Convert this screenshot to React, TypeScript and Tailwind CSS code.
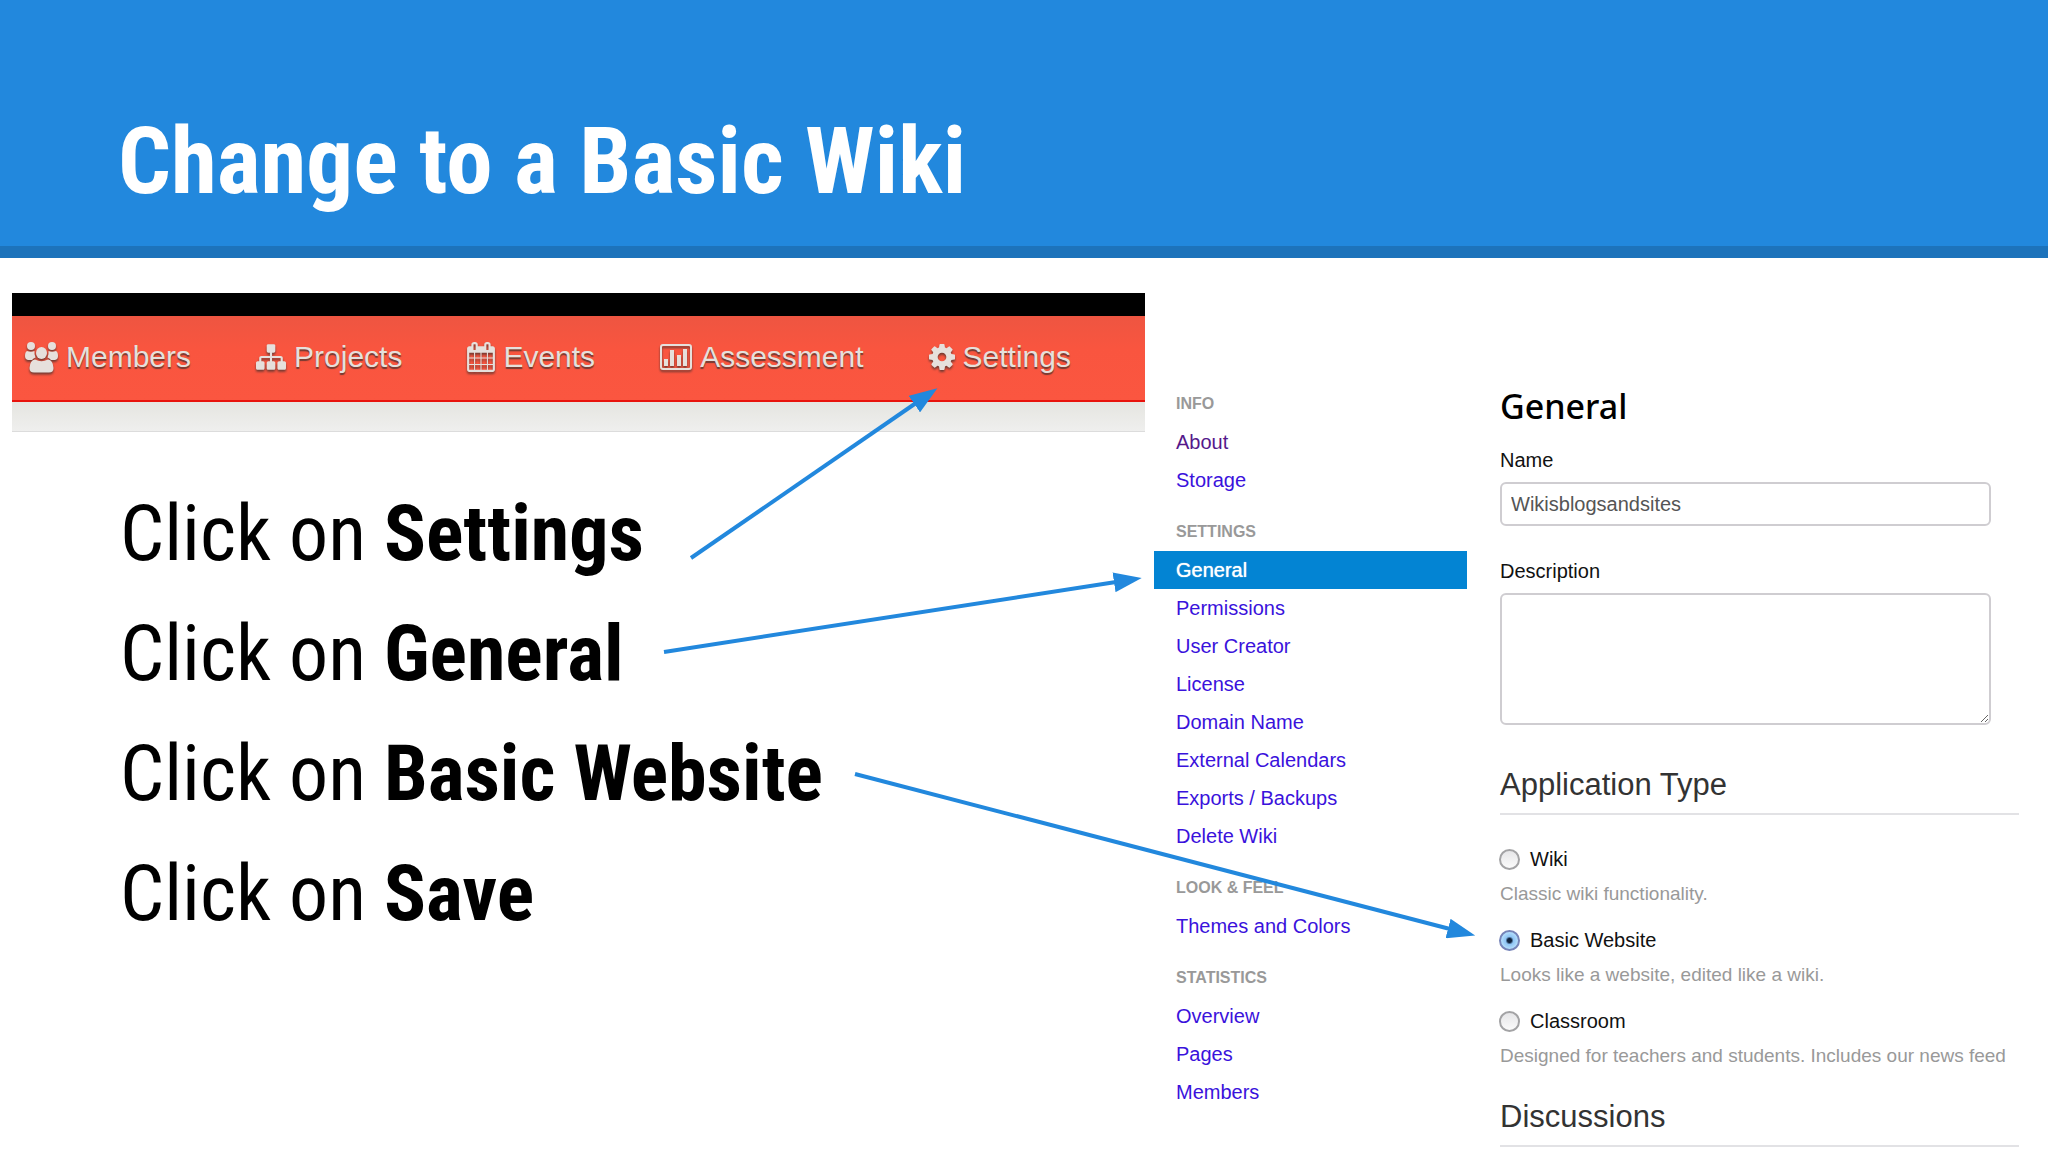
import { useState } from "react"
import type { ReactNode } from "react"

interface NavItem {
  label: string
  icon: ReactNode
}

interface MenuSection {
  title: string
  items: string[]
}

const navItems: NavItem[] = [
  {
    label: "Members",
    icon: (
      <svg viewBox="0 0 33 31" className="h-[31px] w-[33px]" fill="currentColor" aria-hidden="true">
        <circle cx="6" cy="4" r="4" />
        <circle cx="27" cy="4" r="4" />
        <path d="M2 9Q6 10.500 9.500 9Q9 12 10.500 15.500Q8.500 16 7 18H3Q0 17.500 0 14Q0 10 2 9Z" />
        <path d="M31 9Q27 10.500 23.500 9Q24 12 22.500 15.500Q24.500 16 26 18H30Q33 17.500 33 14Q33 10 31 9Z" />
        <ellipse cx="16.500" cy="11" rx="5.500" ry="6" />
        <path d="M10 17.500Q16.500 21 23 17.500Q28 18 28.500 26Q28.500 30.500 24 30.500H9Q4.500 30.500 4.500 26Q5 18 10 17.500Z" />
      </svg>
    ),
  },
  {
    label: "Projects",
    icon: (
      <svg viewBox="0 128 1792 1536" className="h-7 w-[30px]" fill="currentColor" aria-hidden="true">
        <path d="M1792 1248v320q0 40-28 68t-68 28h-320q-40 0-68-28t-28-68v-320q0-40 28-68t68-28h96v-192h-512v192h96q40 0 68 28t28 68v320q0 40-28 68t-68 28h-320q-40 0-68-28t-28-68v-320q0-40 28-68t68-28h96v-192h-512v192h96q40 0 68 28t28 68v320q0 40-28 68t-68 28h-320q-40 0-68-28t-28-68v-320q0-40 28-68t68-28h96v-192q0-52 38-90t90-38h512v-192h-96q-40 0-68-28t-28-68v-320q0-40 28-68t68-28h320q40 0 68 28t28 68v320q0 40-28 68t-68 28h-96v192h512q52 0 90 38t38 90v192h96q40 0 68 28t28 68z" />
      </svg>
    ),
  },
  {
    label: "Events",
    icon: (
      <svg viewBox="64 0 1664 1792" className="h-[30px] w-7" fill="currentColor" aria-hidden="true">
        <path d="M192 1664h288v-288h-288v288zm352 0h320v-288h-320v288zm-352-352h288v-320h-288v320zm352 0h320v-320h-320v320zm-352-384h288v-288h-288v288zm736 736h320v-288h-320v288zm-384-736h320v-288h-320v288zm768 736h288v-288h-288v288zm-384-352h320v-320h-320v320zm-352-864v-288q0-13-9.5-22.5t-22.5-9.5h-64q-13 0-22.5 9.5t-9.5 22.5v288q0 13 9.5 22.5t22.5 9.5h64q13 0 22.5-9.5t9.5-22.5zm736 864h288v-320h-288v320zm-384-384h320v-288h-320v288zm384 0h288v-288h-288v288zm32-480v-288q0-13-9.5-22.5t-22.5-9.5h-64q-13 0-22.5 9.5t-9.5 22.5v288q0 13 9.5 22.5t22.5 9.5h64q13 0 22.5-9.5t9.5-22.5zm384-64v1280q0 52-38 90t-90 38h-1408q-52 0-90-38t-38-90v-1280q0-52 38-90t90-38h128v-96q0-66 47-113t113-47h64q66 0 113 47t47 113v96h384v-96q0-66 47-113t113-47h64q66 0 113 47t47 113v96h128q52 0 90 38t38 90z" />
      </svg>
    ),
  },
  {
    label: "Assessment",
    icon: (
      <svg viewBox="0 0 32 26" className="h-[26px] w-8" fill="currentColor" aria-hidden="true">
        <rect x="1" y="1" width="30" height="24" rx="2" fill="none" stroke="currentColor" strokeWidth="2" />
        <rect x="4" y="15" width="4" height="7" />
        <rect x="10" y="6" width="4" height="16" />
        <rect x="17" y="11" width="4" height="11" />
        <rect x="23" y="5" width="4" height="17" />
      </svg>
    ),
  },
  {
    label: "Settings",
    icon: (
      <svg viewBox="128 128 1536 1536" className="h-[26px] w-[26px]" fill="currentColor" aria-hidden="true">
        <path d="M1152 896q0-106-75-181t-181-75-181 75-75 181 75 181 181 75 181-75 75-181zm512-109v222q0 12-8 23t-20 13l-185 28q-19 54-39 91 35 50 107 138 10 12 10 25t-9 23q-27 37-99 108t-94 71q-12 0-26-9l-138-108q-44 23-91 38-16 136-29 186-7 28-36 28h-222q-14 0-24.5-8.5t-11.5-21.5l-28-184q-49-16-90-37l-141 107q-10 9-25 9-14 0-25-11-126-114-165-168-7-10-7-23 0-12 8-23 15-21 51-66.5t54-70.5q-27-50-41-99l-183-27q-13-2-21-12.5t-8-23.5v-222q0-12 8-23t19-13l186-28q14-46 39-92-40-57-107-138-10-12-10-24 0-10 9-23 26-36 98.5-107.5t94.5-71.5q13 0 26 10l138 107q44-23 91-38 16-136 29-186 7-28 36-28h222q14 0 24.5 8.5t11.5 21.5l28 184q49 16 90 37l142-107q9-9 24-9 13 0 25 10 129 119 165 170 7 8 7 22 0 12-8 23-15 21-51 66.5t-54 70.5q26 50 41 98l183 28q13 2 21 12.5t8 23.5z" />
      </svg>
    ),
  },
]

const steps = ["Settings", "General", "Basic Website", "Save"]

const sections: MenuSection[] = [
  { title: "INFO", items: ["About", "Storage"] },
  {
    title: "SETTINGS",
    items: [
      "General",
      "Permissions",
      "User Creator",
      "License",
      "Domain Name",
      "External Calendars",
      "Exports / Backups",
      "Delete Wiki",
    ],
  },
  { title: "LOOK & FEEL", items: ["Themes and Colors"] },
  { title: "STATISTICS", items: ["Overview", "Pages", "Members"] },
]

const appTypes = [
  { id: "wiki", label: "Wiki", hint: "Classic wiki functionality." },
  { id: "website", label: "Basic Website", hint: "Looks like a website, edited like a wiki." },
  { id: "classroom", label: "Classroom", hint: "Designed for teachers and students. Includes our news feed" },
]

function NavBar() {
  return (
    <div className="ml-3 mr-[9px] mt-[35px]">
      <div className="h-[23px] bg-black" />
      <nav className="flex h-[86px] items-center gap-[65px] border-b-2 border-[#e8130c] bg-gradient-to-b from-[#ee5541] via-[#f9553f] via-40% to-[#fb5640] pb-0.5 pl-[13px]">
        {navItems.map((item) => (
          <a
            key={item.label}
            href="#"
            className="flex items-center gap-2 whitespace-nowrap text-[30px] leading-9 text-[#e6e0dc] text-shadow-[0_2px_1px_rgb(70_50_45/0.75)]"
          >
            <span className="drop-shadow-[0_2px_1px_rgba(70,50,45,0.75)]">{item.icon}</span>
            {item.label}
          </a>
        ))}
      </nav>
      <div className="h-[30px] border-b border-[#dcdcdc] bg-gradient-to-b from-[#e5e5e0] to-[#efefee]" />
    </div>
  )
}

function SideMenu() {
  return (
    <nav className="flex flex-col gap-3.5 pt-[127px]">
      {sections.map((section) => (
        <div key={section.title}>
          <h3 className="pl-[22px] text-base font-bold leading-[38px] text-[#999999]">{section.title}</h3>
          <ul>
            {section.items.map((item) => (
              <li key={item}>
                <a
                  href="#"
                  className={
                    item === "General"
                      ? "block bg-[#0384d3] pl-[22px] text-xl leading-[38px] text-white text-shadow-[0_0_1px_rgb(255_255_255)]"
                      : item === "About"
                        ? "block pl-[22px] text-xl leading-[38px] text-[#55198b]"
                        : "block pl-[22px] text-xl leading-[38px] text-[#3a12dc]"
                  }
                >
                  {item}
                </a>
              </li>
            ))}
          </ul>
        </div>
      ))}
    </nav>
  )
}

function SettingsForm() {
  const [name, setName] = useState("Wikisblogsandsites")
  const [description, setDescription] = useState("")
  const [appType, setAppType] = useState("website")

  return (
    <form className="pl-[33px] pr-[29px] pt-[124px]">
      <h2 className="font-['Noto_Sans','Open_Sans',sans-serif] text-[34px] font-medium leading-12 text-black">
        General
      </h2>

      <label htmlFor="name" className="mt-4 block text-xl leading-7 text-[#111111]">
        Name
      </label>
      <input
        id="name"
        value={name}
        onChange={(e) => setName(e.target.value)}
        className="mt-2 block h-11 w-[491px] max-w-full rounded-md border-2 border-[#cfcdd1] bg-white px-[9px] text-xl text-[#555555]"
      />

      <label htmlFor="description" className="mt-[31px] block text-xl leading-7 text-[#111111]">
        Description
      </label>
      <textarea
        id="description"
        value={description}
        onChange={(e) => setDescription(e.target.value)}
        className="mt-2 block h-[132px] w-[491px] max-w-full rounded-md border-2 border-[#cfcdd1] bg-white px-[9px] py-2 text-xl text-[#555555]"
      />

      <h2 className="mt-10 border-b-2 border-[#e2e2e5] pb-2 text-[31px] leading-10 text-[#333333]">
        Application Type
      </h2>
      <div className="mt-[29px] flex flex-col gap-[15px]">
        {appTypes.map((type) => (
          <div key={type.id}>
            <label htmlFor={type.id} className="flex h-[30px] items-center gap-2.5 text-xl text-[#111111]">
              <input
                id={type.id}
                type="radio"
                name="appType"
                checked={appType === type.id}
                onChange={() => setAppType(type.id)}
                aria-describedby={`${type.id}-hint`}
                className="-ml-px h-[21px] w-[21px] shrink-0 appearance-none rounded-full border-2 border-[#a3a3a5] bg-gradient-to-b from-[#e6e6e8] to-[#fbfbfb] checked:border-[#7684b8] checked:bg-[radial-gradient(circle,#10223c_0_2px,#8fc4f4_4px,#b9e2fd_9px)]"
              />
              {type.label}
            </label>
            <p id={`${type.id}-hint`} className="whitespace-nowrap pt-1 text-[19px] leading-8 text-[#999999]">
              {type.hint}
            </p>
          </div>
        ))}
      </div>

      <h2 className="mt-[25px] border-b-2 border-[#e2e2e5] pb-2 text-[31px] leading-10 text-[#333333]">
        Discussions
      </h2>
    </form>
  )
}

function Arrows() {
  return (
    <svg
      viewBox="0 0 2048 1152"
      className="pointer-events-none absolute inset-0 h-full w-full"
      stroke="#2288dd"
      strokeWidth="4"
      aria-hidden="true"
    >
      <defs>
        <marker id="head" viewBox="0 0 28 20" refX="2" refY="10" markerWidth="28" markerHeight="20" markerUnits="userSpaceOnUse" orient="auto">
          <path d="M0 0L28 10L0 20Z" fill="#2288dd" stroke="none" />
        </marker>
      </defs>
      <path d="M691 558L916 403" markerEnd="url(#head)" />
      <path d="M664 652L1116 582" markerEnd="url(#head)" />
      <path d="M855 774L1450 929" markerEnd="url(#head)" />
    </svg>
  )
}

export default function App() {
  return (
    <div className="relative min-h-screen overflow-hidden bg-white font-['Liberation_Sans',Arial,sans-serif]">
      <header className="border-b-12 border-[#1d73bb] bg-[#2288dd] pb-[30px] pl-[118px] pt-[108px]">
        <h1 className="font-['Roboto_Condensed',Roboto,sans-serif] text-[93px] font-bold leading-[108px] text-white">
          Change to a Basic Wiki
        </h1>
      </header>

      <main className="grid grid-cols-[1154fr_313fr_581fr]">
        <section className="min-w-0">
          <NavBar />
          <ul className="pl-[120px] pt-[42px] font-['Roboto_Condensed',Roboto,sans-serif] text-[78px] leading-[120px] text-black">
            {steps.map((step) => (
              <li key={step} className="whitespace-nowrap">
                Click on <strong>{step}</strong>
              </li>
            ))}
          </ul>
        </section>
        <SideMenu />
        <SettingsForm />
      </main>

      <Arrows />
    </div>
  )
}
